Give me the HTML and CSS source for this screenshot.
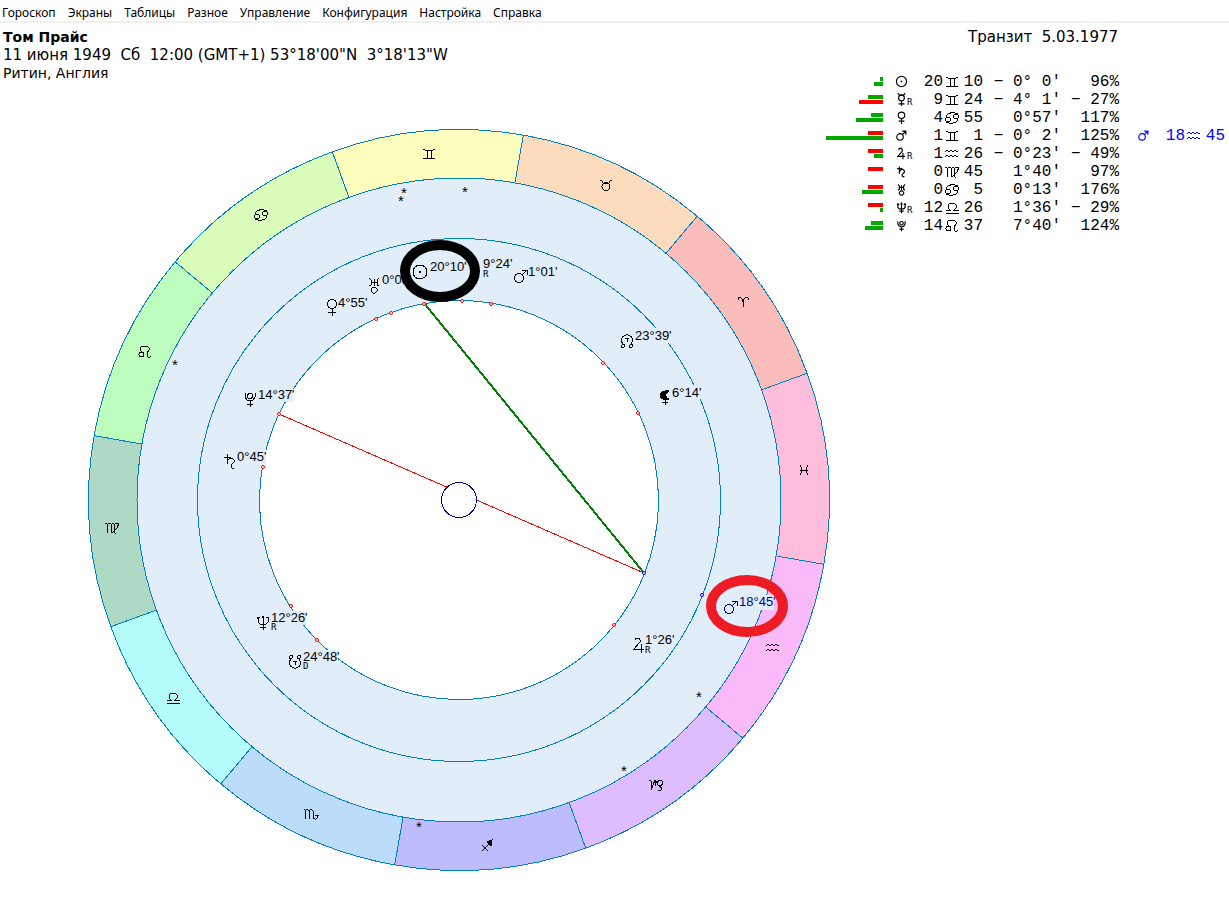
FILE: index.html
```html
<!DOCTYPE html>
<html lang="ru">
<head>
<meta charset="utf-8">
<title>Том Прайс — Транзит</title>
<link rel="stylesheet" href="styles.css">
</head>
<body>
<svg class="defs" aria-hidden="true">
  <defs>
    <path id="sector" d="M0 0L370.5 0A370.5 370.5 0 0 0 320.9 -185.25Z"/>
    <g id="gemini"><path d="M-6-5L-4-4H4L6-5M-6 5L-4 4H4L6 5M-2-4V4M2-4V4"/></g>
    <g id="cancer"><circle cx="-4" cy="1.5" r="2.5"/><circle cx="4" cy="-1.5" r="2.5"/><path d="M-6 0C-6-6 2-6 6-4M6 0C6 6-2 6-6 4"/></g>
    <g id="leo"><circle cx="-3.5" cy="2.5" r="2.5"/><path d="M-3 0L-5-2V-4L-3-6H2L4-4V-2L2 1V4L3 5H5L6 4"/></g>
    <g id="virgo"><path d="M-7-5L-5-4V5M-5-3L-3-5L-1-4V5M-1-3L1-5L2-4V4L4 6M2-3L4-5L7-5L5 0L0 5"/></g>
    <g id="libra"><path d="M-6.5 5H6.5M-6.5 2H-2L-4 0V-3L-2-5H2L4-3V0L2 2H6.5"/></g>
    <g id="scorpio"><path d="M-7-5L-6-4V5M-6-3L-4-5L-2-3V5M-2-3L0-5L2-3V4L4 5H5L6 4V1M4 2L6 1L8 2"/></g>
    <g id="sagittarius"><path d="M-5 5L5-5M-5-1L1 5"/><path class="solid" d="M0-4L5-6L4 0Z"/></g>
    <g id="capricorn"><path d="M-7-5L-5-4V5L-1-5V1M-1-1L1-4M2 5H5L6 3L2 0"/><circle cx="4" cy="-2" r="2.5"/></g>
    <g id="aquarius"><path d="M-7-2L-5-4L-3-2L-1-4L1-2L3-4L5-2L6-3M-7 3L-5 1L-3 3L-1 1L1 3L3 1L5 3L6 2"/></g>
    <g id="pisces"><path d="M-4-5Q0 0-4 5M4-5Q0 0 4 5M-4 0H4"/></g>
    <g id="aries"><path d="M-5-2V-4L-4-5H-3L-1-3L0 0V5M5-2V-4L4-5H3L1-3L0 0"/></g>
    <g id="taurus"><circle cx="0" cy="1.5" r="4"/><path d="M-6-5L-4-4L-3-2H3L4-4L6-5"/></g>

    <g id="sun"><circle r="7"/><circle class="solid" r=".5"/></g>
    <g id="mercury"><circle cy="-2" r="4"/><path d="M-5-9L-3-6H3L5-9M0 2V9M-4 6H4"/></g>
    <g id="venus"><circle cy="-3" r="4.5"/><path d="M0 2V9M-4 5H4"/></g>
    <g id="mars"><circle cx="-2" cy="2" r="4.5"/><path d="M1-1L6-6M1-6H6V-1"/></g>
    <g id="jupiter"><path d="M-4-5L-3-7H0L1-5V-3L-5 4H5M2-1V8"/></g>
    <g id="saturn"><path d="M-6-4H1M-3-7V3M-3 0L0-3H2L4-1V1L1 4V6L2 7H4"/></g>
    <g id="uranus"><path d="M-1 2H1L3 4V6L1 8H-1L-3 6V4Z"/><path d="M-5-7L-3-5V0L-5 1M5-7L3-5V0L5 1M-3-3H3M0-6V1"/></g>
    <g id="neptune"><path d="M-5-5V0L-3 2H3L5 0V-5M0-6V8M-3 5H3M-6-3L-5-5L-3-4M-1-4L0-6L1-4M3-4L5-5L6-3"/></g>
    <g id="pluto"><circle cy="-3" r="2.5"/><path d="M-5-6V-2L-3 1L0 2L3 1L5-2V-6M0 2V8M-3 5H3"/></g>
    <g id="nodeloop"><path d="M-3 4A5.5 5.5 0 1 1 3 4"/><circle cx="-4" cy="5" r="1.5"/><circle cx="4" cy="5" r="1.5"/></g>
    <g id="tee"><path d="M-2-2H2M0-2V2"/></g>
    <g id="lilith"><path class="solid" d="M4-6Q-5-7-5-1Q-3 4 4 2Q-3-1 4-6Z"/><path d="M0 2V8M-3 5H3"/></g>
  </defs>
</svg>

<nav class="menu">
  <button>Гороскоп</button><button>Экраны</button><button>Таблицы</button><button>Разное</button><button>Управление</button><button>Конфигурация</button><button>Настройка</button><button>Справка</button>
</nav>

<main class="workspace">
  <section class="natal">
    <header class="person">
      <h1>Том Прайс</h1>
      <p>11 июня 1949  Сб  12:00 (GMT+1) 53°18'00"N  3°18'13"W</p>
      <p class="place">Ритин, Англия</p>
    </header>
    <svg class="wheel" viewBox="0 82 826 816" role="img" aria-label="Карта транзитов">
      <g class="rings" transform="translate(459 500)">
        <use href="#sector" transform="rotate(-80)" fill="#fdfdbd"/>
        <use href="#sector" transform="rotate(-50)" fill="#fddbbd"/>
        <use href="#sector" transform="rotate(-20)" fill="#fabdb9"/>
        <use href="#sector" transform="rotate(10)" fill="#fdbddb"/>
        <use href="#sector" transform="rotate(40)" fill="#fabafa"/>
        <use href="#sector" transform="rotate(70)" fill="#ddbdfd"/>
        <use href="#sector" transform="rotate(100)" fill="#bdbdfd"/>
        <use href="#sector" transform="rotate(130)" fill="#bcdcfc"/>
        <use href="#sector" transform="rotate(160)" fill="#b5fdfd"/>
        <use href="#sector" transform="rotate(190)" fill="#aed9c5"/>
        <use href="#sector" transform="rotate(220)" fill="#bdfdbd"/>
        <use href="#sector" transform="rotate(250)" fill="#dbfdbb"/>
        <circle class="band" r="322"/>
        <circle class="band" r="261.5"/>
        <circle class="hub" r="199.5"/>
      </g>

      <path class="trine" d="M424 303L644 573"/>
      <path class="opposition" d="M279 414L644 573"/>
      <circle class="centre" cx="459" cy="500" r="17.5"/>

      <g class="glyph">
        <use href="#gemini" x="429" y="154"/><use href="#taurus" x="606" y="185"/><use href="#aries" x="743" y="302"/>
        <use href="#pisces" x="804" y="470"/><use href="#aquarius" x="773" y="648"/><use href="#capricorn" x="656" y="785"/>
        <use href="#sagittarius" x="487" y="846"/><use href="#scorpio" x="311" y="814"/><use href="#libra" x="173" y="698"/>
        <use href="#virgo" x="112" y="528"/><use href="#leo" x="145" y="352"/><use href="#cancer" x="261" y="215"/>
      </g>

      <g class="plate">
        <rect x="429" y="260" width="37" height="15"/><rect x="635" y="328" width="35" height="15"/><rect x="672" y="385" width="28" height="15"/>
        <rect x="258" y="387" width="35" height="15"/><rect x="237" y="450" width="29" height="15"/><rect x="272" y="611" width="34" height="14"/>
        <rect x="303" y="650" width="35" height="14"/><rect x="739" y="595" width="35" height="15"/>
      </g>

      <g class="point">
        <circle cx="376" cy="319" r="1.5"/><circle cx="391" cy="313" r="1.5"/><circle cx="424" cy="304" r="1.5"/><circle cx="462" cy="301" r="1.5"/>
        <circle cx="491" cy="304" r="1.5"/><circle cx="603" cy="363" r="1.5"/><circle cx="638" cy="413" r="1.5"/><circle cx="614" cy="625" r="1.5"/>
        <circle cx="317" cy="640" r="1.5"/><circle cx="291" cy="606" r="1.5"/><circle cx="263" cy="467" r="1.5"/><circle cx="279" cy="414" r="1.5"/>
        <circle class="outer" cx="644" cy="573" r="1.5"/><circle class="outer" cx="702" cy="595" r="1.5"/>
      </g>

      <g class="glyph">
        <use href="#venus" x="332" y="307"/><use href="#uranus" x="374" y="285"/><use href="#sun" x="420" y="272"/><use href="#mercury" x="474" y="273"/>
        <use href="#mars" x="521" y="276"/><use href="#nodeloop" x="627" y="341"/><use href="#tee" x="627" y="340"/><use href="#lilith" x="665" y="397"/>
        <use href="#pluto" x="250" y="399"/><use href="#saturn" x="230" y="461"/><use href="#neptune" x="263" y="622"/>
        <use href="#nodeloop" transform="translate(295 662) scale(1 -1)"/><use href="#tee" x="295" y="663"/><use href="#jupiter" x="639" y="645"/>
      </g>
      <g class="glyph transit-mark"><use href="#mars" x="731" y="607"/></g>

      <g class="degree">
        <text x="338" y="307">4°55'</text><text x="382" y="284">0°05'</text><text x="430" y="271">20°10'</text><text x="483" y="268">9°24'</text>
        <text x="528" y="276">1°01'</text><text x="635" y="340">23°39'</text><text x="672" y="397">6°14'</text><text x="258" y="399">14°37'</text>
        <text x="237" y="461">0°45'</text><text x="271" y="622">12°26'</text><text x="303" y="661">24°48'</text><text x="645" y="644">1°26'</text>
        <text class="transit" x="739" y="606">18°45'</text>
      </g>
      <g class="motion">
        <text x="483" y="277">R</text><text x="271" y="630">R</text><text x="645" y="653">R</text><text x="303" y="669">D</text>
      </g>
      <g class="star">
        <text x="404" y="198">*</text><text x="401" y="206">*</text><text x="465" y="197">*</text><text x="175" y="370">*</text>
        <text x="699" y="702">*</text><text x="624" y="776">*</text><text x="419" y="832">*</text>
      </g>

      <ellipse class="mark" cx="440" cy="271" rx="35" ry="26"/>
      <ellipse class="mark mark-red" cx="747" cy="606" rx="36" ry="26"/>
    </svg>
  </section>

  <aside class="transits">
    <h2>Транзит  5.03.1977</h2>
    <table>
      <colgroup><col class="c-bars"><col class="c-body"><col class="c-deg"><col class="c-sign"><col class="c-min"><col class="c-speed"><col class="c-rate"><col class="c-tbody"><col class="c-tdeg"><col class="c-tsign"><col class="c-tmin"></colgroup>
      <tbody>
        <tr><td><div class="bars"><i style="width:3px"></i><i style="width:9px"></i></div></td><td class="body"><svg class="planet" viewBox="-9 -9 18 18"><use href="#sun"/></svg></td><td>20</td><td><svg class="sign" viewBox="-9 -9 18 18"><use href="#gemini"/></svg></td><td>10</td><td>− 0° 0'</td><td>96%</td></tr>
        <tr><td><div class="bars"><i style="width:15px"></i><i class="neg" style="width:24px"></i></div></td><td class="body"><svg class="planet" viewBox="-9 -9 18 18"><use href="#mercury"/></svg><small>R</small></td><td>9</td><td><svg class="sign" viewBox="-9 -9 18 18"><use href="#gemini"/></svg></td><td>24</td><td>− 4° 1'</td><td>− 27%</td></tr>
        <tr><td><div class="bars"><i style="width:12px"></i><i style="width:27px"></i></div></td><td class="body"><svg class="planet" viewBox="-9 -9 18 18"><use href="#venus"/></svg></td><td>4</td><td><svg class="sign" viewBox="-9 -9 18 18"><use href="#cancer"/></svg></td><td>55</td><td>0°57'</td><td>117%</td></tr>
        <tr><td><div class="bars"><i class="neg" style="width:15px"></i><i style="width:57px"></i></div></td><td class="body"><svg class="planet" viewBox="-9 -9 18 18"><use href="#mars"/></svg></td><td>1</td><td><svg class="sign" viewBox="-9 -9 18 18"><use href="#gemini"/></svg></td><td>1</td><td>− 0° 2'</td><td>125%</td><td class="body now"><svg class="planet" viewBox="-9 -9 18 18"><use href="#mars"/></svg></td><td class="now">18</td><td class="now"><svg class="sign" viewBox="-9 -9 18 18"><use href="#aquarius"/></svg></td><td class="now">45</td></tr>
        <tr><td><div class="bars"><i class="neg" style="width:15px"></i><i style="width:9px"></i></div></td><td class="body"><svg class="planet" viewBox="-9 -9 18 18"><use href="#jupiter"/></svg><small>R</small></td><td>1</td><td><svg class="sign" viewBox="-9 -9 18 18"><use href="#aquarius"/></svg></td><td>26</td><td>− 0°23'</td><td>− 49%</td></tr>
        <tr><td><div class="bars"><i class="neg" style="width:15px"></i></div></td><td class="body"><svg class="planet" viewBox="-9 -9 18 18"><use href="#saturn"/></svg></td><td>0</td><td><svg class="sign" viewBox="-9 -9 18 18"><use href="#virgo"/></svg></td><td>45</td><td>1°40'</td><td>97%</td></tr>
        <tr><td><div class="bars"><i class="neg" style="width:15px"></i><i style="width:21px"></i></div></td><td class="body"><svg class="planet" viewBox="-9 -9 18 18"><use href="#uranus"/></svg></td><td>0</td><td><svg class="sign" viewBox="-9 -9 18 18"><use href="#cancer"/></svg></td><td>5</td><td>0°13'</td><td>176%</td></tr>
        <tr><td><div class="bars"><i class="neg" style="width:15px"></i><i style="width:3px"></i></div></td><td class="body"><svg class="planet" viewBox="-9 -9 18 18"><use href="#neptune"/></svg><small>R</small></td><td>12</td><td><svg class="sign" viewBox="-9 -9 18 18"><use href="#libra"/></svg></td><td>26</td><td>1°36'</td><td>− 29%</td></tr>
        <tr><td><div class="bars"><i style="width:12px"></i><i style="width:18px"></i></div></td><td class="body"><svg class="planet" viewBox="-9 -9 18 18"><use href="#pluto"/></svg></td><td>14</td><td><svg class="sign" viewBox="-9 -9 18 18"><use href="#leo"/></svg></td><td>37</td><td>7°40'</td><td>124%</td></tr>
      </tbody>
    </table>
  </aside>
</main>
</body>
</html>
```
FILE: styles.css
```css
* { box-sizing: border-box; }
body { margin: 0; background: #fff; color: #000; font-family: "DejaVu Sans", sans-serif; }
.defs { position: absolute; width: 0; height: 0; }

.menu { display: flex; gap: 12px; padding: 5px 2px 0; border-bottom: 2px solid #f0f0f0; }
.menu button { border: 0; padding: 0; background: none; color: #000; font: 12px/16px "Noto Sans", sans-serif; }

.workspace { display: grid; grid-template-columns: minmax(0, 1fr) 403px; }
.person { padding: 5px 3px 0; }
h1, h2, p { margin: 0; font-size: 15px; line-height: 18px; font-weight: normal; white-space: pre; }
h1 { font-weight: bold; font-size: 14px; }
.place { font-size: 14px; }

.wheel { display: block; width: 100%; height: auto; overflow: visible; }
.rings { stroke: #0080c0; stroke-width: 1; shape-rendering: crispEdges; }
.band { fill: #e1edf9; }
.hub { fill: #fff; }
.trine { stroke: #008000; stroke-width: 2; shape-rendering: crispEdges; }
.opposition { stroke: #f00; shape-rendering: crispEdges; }
.centre { fill: #fff; stroke: #000080; shape-rendering: crispEdges; }
.glyph, .sign { fill: none; stroke: currentColor; stroke-width: 1; shape-rendering: crispEdges; }
.solid { fill: currentColor; }
.transit-mark { color: #000090; }
.plate { fill: #e1edf9; }
.point { fill: #fff; stroke: #f00; }
.point .outer { stroke: #00f; }
.degree { font: 13px "Liberation Sans", sans-serif; }
.transit { fill: #000090; }
.motion { font: 9px "DejaVu Sans Mono", monospace; }
.star { font: 15px "Liberation Sans", sans-serif; text-anchor: middle; }
.mark { fill: none; stroke: #000; stroke-width: 10; }
.mark-red { stroke: #ed1c24; }

.transits h2 { padding: 5px 0 0 142px; }
table { width: 399px; margin-top: 27px; table-layout: fixed; border-collapse: collapse; font: 16px/18px "Liberation Mono", monospace; }
td { height: 18px; padding: 0; text-align: right; white-space: pre; vertical-align: top; }
.c-bars { width: 57px; }
.c-body { width: 31px; }
.c-deg { width: 29px; }
.c-sign { width: 18px; }
.c-min { width: 22px; }
.c-speed { width: 78px; }
.c-rate { width: 58px; }
.c-tbody { width: 34px; }
.c-tdeg { width: 32px; }
.c-tsign { width: 19px; }
.c-tmin { width: 21px; }
.bars { display: flex; flex-direction: column; align-items: flex-end; gap: 1px; padding-top: 4px; }
.bars i { height: 4px; background: #00a800; }
.bars .neg { background: #f00; }
.body { padding: 2px 0 0 12px; text-align: left; line-height: 0; }
.body.now { padding-left: 18px; }
.body small { display: inline-block; margin-left: -1px; padding-top: 5px; font: 9px/9px "DejaVu Sans Mono", monospace; vertical-align: top; }
.planet { width: 13px; height: 13px; vertical-align: top; fill: none; stroke: currentColor; stroke-width: 1.6; }
.sign { display: block; width: 18px; height: 18px; }
.now { color: #00f; }
```
